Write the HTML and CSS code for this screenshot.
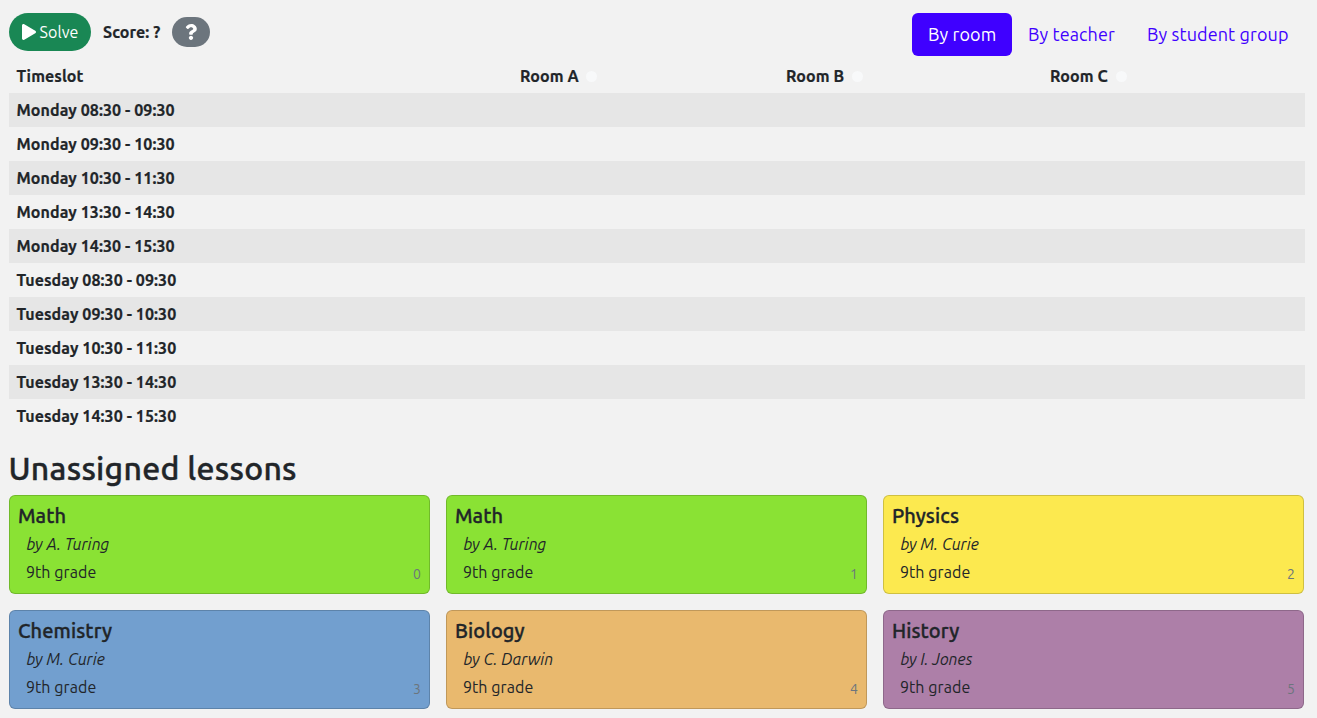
FILE: index.html
```html
<!DOCTYPE html>
<html lang="en">
<head>
<meta charset="utf-8">
<title>School timetabling</title>
<link rel="stylesheet" href="styles.css">
</head>
<body>
<header class="toolbar">
  <div class="actions">
    <button class="solve"><svg width="14" height="16" viewBox="0 0 448 512" fill="currentColor"><path d="M424.4 214.7L72.4 6.6C43.8-10.3 0 6.1 0 47.9V464c0 37.5 40.7 60.1 72.4 41.3l352-208c31.4-18.5 31.5-64.1 0-82.6z"/></svg><span>Solve</span></button>
    <span class="score">Score: ?</span>
    <button class="help" aria-label="Score analysis"><svg width="12" height="16" viewBox="0 0 384 512" fill="currentColor"><path d="M202.021 0C122.202 0 70.503 32.703 29.914 91.026c-7.363 10.58-5.093 25.086 5.178 32.874l43.138 32.709c10.373 7.865 25.132 6.026 33.253-4.148 25.049-31.381 43.63-49.449 82.757-49.449 30.764 0 68.816 19.799 68.816 49.631 0 22.552-18.617 34.134-48.993 51.164-35.423 19.86-82.299 44.576-82.299 106.405V320c0 13.255 10.745 24 24 24h72.471c13.255 0 24-10.745 24-24v-5.773c0-42.86 125.268-44.645 125.268-160.627C377.504 66.256 286.902 0 202.021 0zM192 373.459c-38.196 0-69.271 31.075-69.271 69.271 0 38.195 31.075 69.27 69.271 69.27s69.271-31.075 69.271-69.271-31.075-69.27-69.271-69.27z"/></svg></button>
  </div>
  <nav class="tabs">
    <a class="tab active room">By room</a>
    <a class="tab teacher">By teacher</a>
    <a class="tab group">By student group</a>
  </nav>
</header>
<table class="timetable">
  <colgroup><col class="c-time"><col class="c-a"><col class="c-b"><col class="c-c"></colgroup>
  <thead>
    <tr><th>Timeslot</th><th><span class="room-name">Room A</span><i class="dot"></i></th><th><span class="room-name">Room B</span><i class="dot"></i></th><th><span class="room-name">Room C</span><i class="dot"></i></th></tr>
  </thead>
  <tbody>
    <tr><th>Monday 08:30 - 09:30</th><td></td><td></td><td></td></tr>
    <tr><th>Monday 09:30 - 10:30</th><td></td><td></td><td></td></tr>
    <tr><th>Monday 10:30 - 11:30</th><td></td><td></td><td></td></tr>
    <tr><th>Monday 13:30 - 14:30</th><td></td><td></td><td></td></tr>
    <tr><th>Monday 14:30 - 15:30</th><td></td><td></td><td></td></tr>
    <tr><th>Tuesday 08:30 - 09:30</th><td></td><td></td><td></td></tr>
    <tr><th>Tuesday 09:30 - 10:30</th><td></td><td></td><td></td></tr>
    <tr><th>Tuesday 10:30 - 11:30</th><td></td><td></td><td></td></tr>
    <tr><th>Tuesday 13:30 - 14:30</th><td></td><td></td><td></td></tr>
    <tr><th>Tuesday 14:30 - 15:30</th><td></td><td></td><td></td></tr>
  </tbody>
</table>
<h2 class="heading">Unassigned lessons</h2>
<section class="lessons">
  <article class="card green"><h5>Math</h5><p class="by">by A. Turing</p><div class="foot"><span class="grade">9th grade</span><small>0</small></div></article>
  <article class="card green"><h5>Math</h5><p class="by">by A. Turing</p><div class="foot"><span class="grade">9th grade</span><small>1</small></div></article>
  <article class="card yellow"><h5>Physics</h5><p class="by">by M. Curie</p><div class="foot"><span class="grade">9th grade</span><small>2</small></div></article>
  <article class="card blue"><h5>Chemistry</h5><p class="by">by M. Curie</p><div class="foot"><span class="grade">9th grade</span><small>3</small></div></article>
  <article class="card orange"><h5>Biology</h5><p class="by">by C. Darwin</p><div class="foot"><span class="grade">9th grade</span><small>4</small></div></article>
  <article class="card purple"><h5>History</h5><p class="by">by I. Jones</p><div class="foot"><span class="grade">9th grade</span><small>5</small></div></article>
</section>
</body>
</html>
```
FILE: styles.css
```css
* { box-sizing: border-box; }
body {
  margin: 0;
  padding: 13px 12px 0 8.5px;
  height: 718px;
  overflow: hidden;
  background: #f2f2f2;
  color: #212529;
  font: 16px/24px Ubuntu, "Noto Sans", sans-serif;
  white-space: nowrap;
}
button { border: 0; font: inherit; color: #fff; display: flex; align-items: center; }
.toolbar { display: flex; justify-content: space-between; height: 46px; }
.actions { display: flex; height: 38px; align-items: center; }
.solve { width: 82px; height: 38px; padding: 0 0 0 13px; gap: 4px; border-radius: 19px; background: #198754; letter-spacing: .1px; }
.score { width: 68.5px; margin-left: 12.5px; font-weight: 700; letter-spacing: .07px; -webkit-text-stroke: .2px currentColor; }
.help { width: 38px; height: 30px; padding: 0; justify-content: center; border-radius: 15px; background: #6c757d; }
.tabs { display: flex; height: 43px; }
.tab { padding: 8px 16px; font-size: 18px; line-height: 27px; color: #3f00ff; border-radius: 6px; letter-spacing: .11px; }
.tab.active { background: #3f00ff; color: #fff; }
.room { width: 100px; }
.teacher { width: 119px; }
.group { width: 174px; }
.timetable { width: 1296px; table-layout: fixed; border-collapse: collapse; }
.c-time { width: 503.5px; }
.c-a { width: 266px; }
.c-b { width: 264px; }
.timetable th, .timetable td { height: 34px; padding: 5px 8px; text-align: left; }
.timetable th { font-weight: 700; letter-spacing: .08px; -webkit-text-stroke: .2px currentColor; }
.timetable tbody tr:nth-child(odd) { background: #e6e6e6; }
.room-name { display: inline-block; width: 66px; }
.dot { display: inline-block; width: 11px; height: 11px; border-radius: 50%; background: #f8f9fa; }
.heading { margin: 16px 0 7px; font-size: 32px; line-height: 39px; font-weight: 500; letter-spacing: .26px; -webkit-text-stroke: .4px currentColor; }
.lessons { display: grid; width: 1295px; margin-left: .4px; grid-template-columns: repeat(3, 1fr); gap: 16px; }
.card { height: 99px; padding: 8px; border: 1px solid rgba(0, 0, 0, .176); border-radius: 6px; }
.card h5 { margin: 0 0 4px; font-size: 20px; line-height: 24px; font-weight: 500; letter-spacing: .12px; -webkit-text-stroke: .35px currentColor; }
.by { margin: 0 0 4px 8.5px; font-style: italic; letter-spacing: .05px; }
.foot { display: flex; justify-content: space-between; margin-left: 8px; }
.grade { letter-spacing: .08px; }
.foot small { font-size: 14px; line-height: 28px; color: #6c757d; }
.green { background-color: #8ae234; }
.yellow { background-color: #fce94f; }
.blue { background-color: #729fcf; }
.orange { background-color: #e9b96e; }
.purple { background-color: #ad7fa8; }
```
